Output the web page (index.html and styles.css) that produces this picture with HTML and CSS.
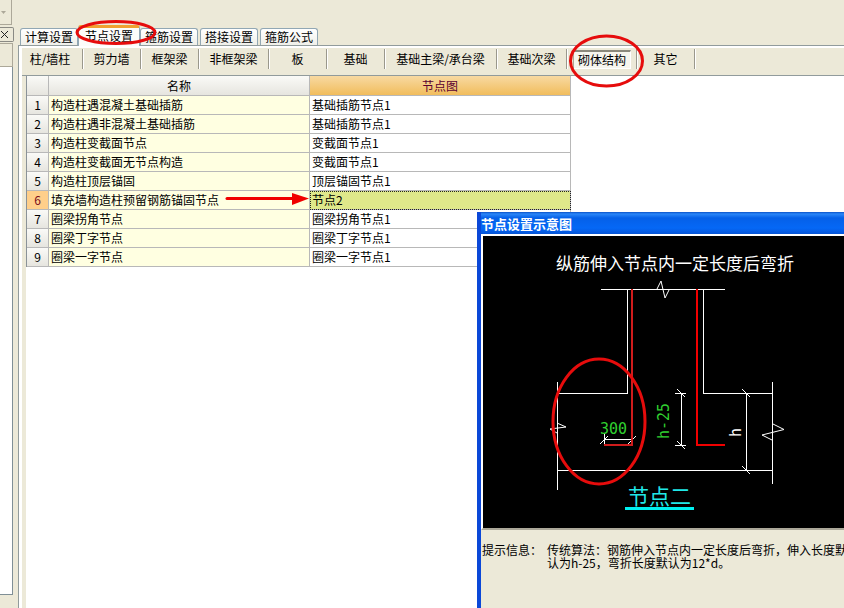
FILE: index.html
```html
<!DOCTYPE html>
<html lang="zh-CN">
<head>
<meta charset="utf-8">
<title>节点设置</title>
<link rel="stylesheet" href="styles.css">
</head>
<body>
<div class="app">
  <aside class="side">
    <div class="side-tool"><svg width="5" height="3" viewBox="0 0 5 3"><path d="M0 0H5L2.5 3Z" fill="#aca899"/></svg></div>
    <button class="side-close" type="button" aria-label="关闭"><svg width="9" height="9" viewBox="0 0 9 9"><path d="M1 1L8 8M8 1L1 8" stroke="#222" fill="none"/></svg></button>
    <div class="side-head"></div>
    <div class="side-list"></div>
    <div class="side-foot"></div>
  </aside>
  <main class="main">
    <div class="tabs" role="tablist">
      <button class="tab" role="tab" type="button">计算设置</button>
      <button class="tab tab-active" role="tab" type="button" aria-selected="true">节点设置</button>
      <button class="tab" role="tab" type="button">箍筋设置</button>
      <button class="tab" role="tab" type="button">搭接设置</button>
      <button class="tab" role="tab" type="button">箍筋公式</button>
    </div>
    <section class="pane">
      <nav class="types">
        <div class="slot slot-first"><button class="type" type="button">柱/墙柱</button></div>
        <div class="slot"><button class="type" type="button">剪力墙</button></div>
        <div class="slot"><button class="type" type="button">框架梁</button></div>
        <div class="slot slot-mid"><button class="type" type="button">非框架梁</button></div>
        <div class="slot"><button class="type" type="button">板</button></div>
        <div class="slot"><button class="type" type="button">基础</button></div>
        <div class="slot slot-wide"><button class="type" type="button">基础主梁/承台梁</button></div>
        <div class="slot slot-mid"><button class="type" type="button">基础次梁</button></div>
        <div class="slot slot-mid"><button class="type type-on" type="button" aria-pressed="true">砌体结构</button></div>
        <div class="slot"><button class="type" type="button">其它</button></div>
      </nav>
      <div class="sheet">
        <table class="grid">
          <colgroup><col class="c-num"><col class="c-name"><col class="c-node"></colgroup>
          <thead><tr><th></th><th>名称</th><th class="hot">节点图</th></tr></thead>
          <tbody>
            <tr><th>1</th><td>构造柱遇混凝土基础插筋</td><td>基础插筋节点1</td></tr>
            <tr><th>2</th><td>构造柱遇非混凝土基础插筋</td><td>基础插筋节点1</td></tr>
            <tr><th>3</th><td>构造柱变截面节点</td><td>变截面节点1</td></tr>
            <tr><th>4</th><td>构造柱变截面无节点构造</td><td>变截面节点1</td></tr>
            <tr><th>5</th><td>构造柱顶层锚固</td><td>顶层锚固节点1</td></tr>
            <tr class="current"><th>6</th><td>填充墙构造柱预留钢筋锚固节点</td><td>节点2</td></tr>
            <tr><th>7</th><td>圈梁拐角节点</td><td>圈梁拐角节点1</td></tr>
            <tr><th>8</th><td>圈梁丁字节点</td><td>圈梁丁字节点1</td></tr>
            <tr><th>9</th><td>圈梁一字节点</td><td>圈梁一字节点1</td></tr>
          </tbody>
        </table>
      </div>
    </section>
  </main>

  <section class="dialog">
    <h2 class="dialog-title">节点设置示意图</h2>
    <div class="dialog-body">
      <div class="canvas">
        <svg width="361" height="292" viewBox="483 236 361 292">
          <g fill="none" stroke="#fff" shape-rendering="crispEdges">
            <path d="M601 289.5H725M627.5 289V393.5H557M703.5 289V393.5H773M557 470.5H773M557.5 382V490M772.5 382V484"/>
            <path d="M746.5 393V471M681.5 393V446M675 393.5H686M675 445.5H686M604.5 434V445M604 439.5H633"/>
          </g>
          <g fill="none" stroke="#fff">
            <path d="M657 289L661 281L665 298L669 290M557 423L566 427L550 429L557 433M773 424L784 429.500L762 435L772 440"/>
            <path d="M742 389L750 397M742 466L750 474M677 389L685 397M677 441L685 449M600 444L608 436M628 444L636 436"/>
          </g>
          <g fill="none" stroke-width="2" shape-rendering="crispEdges">
            <path d="M632 289V445H604" stroke="#d01c1c"/>
            <path d="M697 289V445H725" stroke="#f00000"/>
          </g>
          <text class="d-head" x="556" y="270">纵筋伸入节点内一定长度后弯折</text>
          <text class="d-dim" x="600" y="434">300</text>
          <text class="d-dim" transform="translate(669 439) rotate(-90)">h-25</text>
          <text class="d-dim d-white" transform="translate(741 437) rotate(-90)">h</text>
          <text class="d-name" x="628" y="504">节点二</text>
          <path d="M625 508.500H694" stroke="#00f0f0" stroke-width="3"/>
        </svg>
      </div>
      <dl class="tip">
        <dt>提示信息：</dt>
        <dd>传统算法：钢筋伸入节点内一定长度后弯折，伸入长度默<br>认为h-25，弯折长度默认为12*d。</dd>
      </dl>
    </div>
  </section>

  <svg class="marks" width="844" height="608" viewBox="0 0 844 608" aria-hidden="true">
    <g fill="none" stroke="#e60c0c" stroke-width="3">
      <ellipse cx="116" cy="32.500" rx="39" ry="11"/>
      <ellipse cx="606.500" cy="61" rx="36" ry="25"/>
      <ellipse cx="599" cy="421.500" rx="46" ry="62.500"/>
    </g>
    <path d="M227 198.500H294" stroke="#f00000" stroke-width="3" stroke-linecap="round"/>
    <path d="M292 193L309 198.500L292 205Z" fill="#f00000"/>
  </svg>
</div>
</body>
</html>
```
FILE: styles.css
```css
* { box-sizing: border-box; }

body {
  margin: 0;
  background: #ece9d8;
  color: #000;
  font: 12px/14px "Noto Sans CJK SC", sans-serif;
}

button {
  margin: 0;
  padding: 0;
  border: 0;
  background: none;
  color: inherit;
  font: inherit;
  white-space: nowrap;
}

.app {
  position: relative;
  display: flex;
  gap: 4px;
  min-height: 100vh;
  overflow: hidden;
}

/* Docked strip at the left */
.side {
  display: flex;
  flex-direction: column;
  width: 14px;
  flex: none;
}

.side-tool {
  display: flex;
  align-items: center;
  height: 25px;
  margin-right: 2px;
  padding-left: 1px;
  border-right: 1px solid #aca899;
  border-bottom: 1px solid #aca899;
}

.side-close {
  display: flex;
  align-items: center;
  height: 15px;
  margin-top: 2px;
  border: 1px solid #8a8a84;
  border-left: 0;
  border-radius: 0 2px 2px 0;
}

.side-head {
  height: 24px;
  margin: 1px 1px 0 0;
  border: 1px solid #aca899;
  border-left: 0;
}

.side-list {
  flex: 1;
  margin-right: 1px;
  border-right: 1px solid #7f8f96;
  border-bottom: 1px solid #7f8f96;
  background: #fff;
}

.side-foot { height: 13px; }

/* Tabs */
.main {
  display: flex;
  flex-direction: column;
  flex: 1;
  min-width: 0;
  padding-top: 25px;
}

.tabs {
  display: flex;
  align-items: flex-end;
  gap: 2px;
  height: 20px;
  padding-left: 2px;
}

.tab {
  width: 58px;
  height: 17px;
  border: 1px solid #91a7b4;
  border-bottom: 0;
  border-radius: 3px 3px 0 0;
  background: linear-gradient(#fff, #f0f0ea);
}

.tab-active {
  z-index: 1;
  width: 62px;
  height: 21px;
  margin: 0 -2px -1px;
  padding-bottom: 2px;
  border-top: 3px solid #f0a030;
  background: #fcfcfa;
}

.pane {
  display: flex;
  flex-direction: column;
  flex: 1;
  border-top: 1px solid #919b9c;
  border-left: 1px solid #919b9c;
  background: #fff;
  padding: 2px 0 0 3px;
}

.types {
  display: flex;
  height: 28px;
  padding: 1px 0 6px;
  border-bottom: 1px solid #919b9c;
  background: #ece9d8;
}

.slot {
  display: flex;
  width: 58px;
  flex: none;
  border-right: 1px solid #9a988c;
  box-shadow: 1px 0 #fff;
}

.slot-first {
  width: 61px;
  padding-right: 4px;
}

.slot-mid { width: 70px; }
.slot-wide { width: 112px; }

.type { flex: 1; }

.type-on {
  margin: 1px 5px 0 6px;
  border: 1px solid #fff;
  border-top: 2px solid #8a887c;
  border-left-color: #aca899;
  background: #f6f5ee;
}

.sheet {
  flex: 1;
  border-left: 4px solid #ece9d8;
}

/* Node table */
.grid {
  width: 545px;
  border-left: 1px solid #8a9298;
  border-spacing: 0;
  table-layout: fixed;
}

.c-num { width: 22px; }
.c-name { width: 261px; }

.grid th,
.grid td {
  height: 19px;
  padding: 0 0 0 2px;
  border-right: 1px solid #b8b8b8;
  border-bottom: 1px solid #b8b8b8;
  font-weight: normal;
  text-align: left;
  white-space: nowrap;
}

.grid th {
  padding: 0;
  background: linear-gradient(#fafaf7, #e6e5df);
  text-align: center;
}

.grid thead th { height: 20px; }

.grid .hot {
  background: linear-gradient(#f8d9a2, #f1bd5c);
  color: #5a0030;
}

.grid td:nth-child(2) { background: #ffffe1; }

.grid .current th {
  background: #ffcf8a;
  color: #7a1020;
}

.grid .current td:last-child {
  outline: 1px dotted #222;
  outline-offset: -1px;
  background: #dfe88a;
}

/* Preview window lying over the table */
.dialog {
  position: absolute;
  top: 212px;
  right: 0;
  bottom: 0;
  left: 477px;
  display: flex;
  flex-direction: column;
  overflow: hidden;
  border-left: 4px solid #0b48d8;
  background: #ece9d8;
}

.dialog-title {
  height: 22px;
  margin: 0 0 0 -4px;
  padding: 2px 0 0 4px;
  flex: none;
  background: linear-gradient(#0a52c8, #2a86f8 2px, #0560e8 6px, #0568f6 16px, #0454d8);
  color: #fff;
  font-size: 13px;
  font-weight: bold;
  line-height: 20px;
}

.dialog-body { white-space: nowrap; }

.canvas {
  border-top: 2px solid #fff;
  border-left: 2px solid #fff;
  border-bottom: 2px solid #aca899;
  background: #000;
}

.canvas svg { display: block; }

.d-head { fill: #fff; font-size: 17px; }
.d-dim { fill: #30d030; font: 15px "DejaVu Sans Mono", monospace; }
.d-white { fill: #fff; }
.d-name { fill: #20e8e8; font-size: 21px; }

.tip {
  display: flex;
  gap: 5px;
  margin: 0;
  padding: 13px 0 0 1px;
  line-height: 13px;
}

.tip dd { margin: 0; }

.marks {
  position: absolute;
  top: 0;
  left: 0;
  z-index: 2;
  pointer-events: none;
}
```
